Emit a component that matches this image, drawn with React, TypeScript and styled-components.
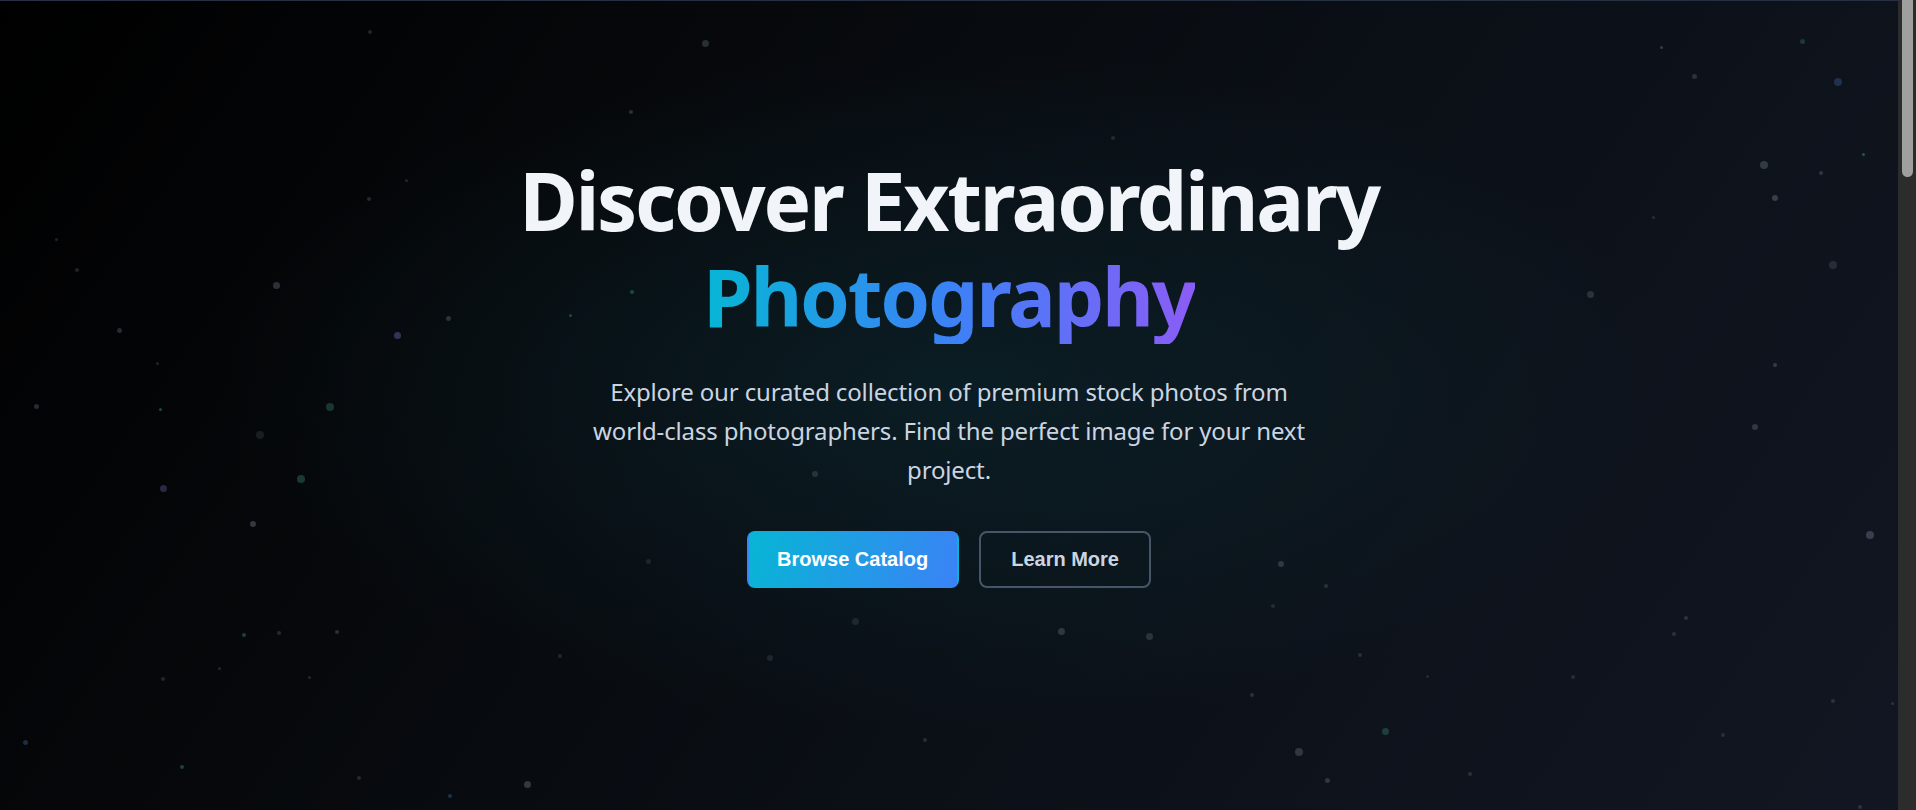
import React from "react";
import styled, { createGlobalStyle } from "styled-components";

const GlobalStyle = createGlobalStyle`
  html, body {
    margin: 0;
    padding: 0;
    background: #0b0f17;
    overflow: hidden;
  }
  body {
    font-family: "Noto Sans", "Open Sans", sans-serif;
  }
`;

const Page = styled.div`
  display: flex;
  height: 810px;
`;

const Hero = styled.section`
  position: relative;
  overflow: hidden;
  flex: 1;
  box-sizing: border-box;
  border-top: 1px solid #263042;
  background:
    radial-gradient(ellipse 55% 60% at 50% 48%, rgba(12, 40, 48, 0.6), rgba(12, 40, 48, 0) 70%),
    linear-gradient(125deg, #000000 0%, #06080b 30%, #0b1017 60%, #111622 100%);
  display: flex;
  flex-direction: column;
  align-items: center;
  padding-top: 151px;
`;

const ScrollTrack = styled.div`
  width: 18px;
  flex-shrink: 0;
  background: #2c2c2c;
  display: flex;
  justify-content: flex-start;
  padding-left: 4px;
  box-sizing: border-box;
`;

const ScrollThumb = styled.div`
  width: 11px;
  height: 177px;
  background: #9f9f9f;
  border-radius: 0 0 6px 6px;
`;

const StarField = styled.div`
  position: absolute;
  inset: 0;
  pointer-events: none;
`;

const Star = styled.span<{ $c: string }>`
  position: absolute;
  border-radius: 50%;
  background: ${(p) => p.$c};
`;

const Content = styled.div`
  position: relative;
  display: flex;
  flex-direction: column;
  align-items: center;
  text-align: center;
`;

const Title = styled.h1`
  margin: 0;
  font-family: "Noto Sans", "Open Sans", sans-serif;
  font-weight: 700;
  font-size: 80px;
  line-height: 96px;
  color: #f1f5f9;
  letter-spacing: -2.3px;
`;

const GradientWord = styled.span`
  display: inline-block;
  background: linear-gradient(90deg, #06b6d4 0%, #3b82f6 50%, #8b5cf6 100%);
  -webkit-background-clip: text;
  background-clip: text;
  color: transparent;
`;

const Subtitle = styled.p`
  margin: 28px 0 0;
  max-width: 738px;
  font-family: "Noto Sans", "Open Sans", sans-serif;
  font-size: 24px;
  line-height: 39px;
  color: #cbd5e1;
  letter-spacing: -0.15px;
`;

const Actions = styled.div`
  display: flex;
  gap: 20px;
  margin-top: 42px;
`;

const Button = styled.button<{ $variant: "primary" | "outline" }>`
  font-family: "Liberation Sans", Arial, sans-serif;
  font-weight: 700;
  font-size: 20px;
  line-height: 25px;
  padding: 14px ${(p) => (p.$variant === "primary" ? "28.5px" : "30.5px")};
  border-radius: 8px;
  cursor: pointer;
  border: 2px solid
    ${(p) => (p.$variant === "primary" ? "transparent" : "#475569")};
  color: ${(p) => (p.$variant === "primary" ? "#ffffff" : "#cbd5e1")};
  background: ${(p) =>
    p.$variant === "primary"
      ? "linear-gradient(110deg, #06b6d4 0%, #3b82f6 100%)"
      : "transparent"};
`;

const stars: [number, number, number, string][] = [
  [577, 35, 7, "rgba(148,163,184,0.25)"],
  [1360, 38, 3, "rgba(148,163,184,0.3)"],
  [1475, 33, 5, "rgba(94,234,212,0.18)"],
  [1387, 62, 5, "rgba(148,163,184,0.22)"],
  [1504, 66, 8, "rgba(96,165,250,0.22)"],
  [516, 91, 4, "rgba(148,163,184,0.25)"],
  [911, 112, 4, "rgba(148,163,184,0.18)"],
  [1444, 134, 8, "rgba(148,163,184,0.28)"],
  [1525, 126, 3, "rgba(94,234,212,0.3)"],
  [1490, 141, 4, "rgba(148,163,184,0.25)"],
  [1453, 161, 6, "rgba(148,163,184,0.3)"],
  [303, 25, 4, "rgba(148,163,184,0.2)"],
  [333, 147, 3, "rgba(148,163,184,0.2)"],
  [302, 162, 4, "rgba(148,163,184,0.22)"],
  [1353, 177, 3, "rgba(148,163,184,0.2)"],
  [46, 195, 3, "rgba(148,163,184,0.2)"],
  [63, 220, 4, "rgba(148,163,184,0.2)"],
  [226, 233, 7, "rgba(148,163,184,0.28)"],
  [517, 238, 4, "rgba(94,234,212,0.25)"],
  [1302, 240, 7, "rgba(148,163,184,0.22)"],
  [1500, 216, 8, "rgba(148,163,184,0.18)"],
  [98, 270, 5, "rgba(148,163,184,0.25)"],
  [325, 274, 7, "rgba(167,139,250,0.3)"],
  [367, 260, 5, "rgba(148,163,184,0.25)"],
  [467, 257, 3, "rgba(94,234,212,0.25)"],
  [129, 297, 3, "rgba(148,163,184,0.2)"],
  [1453, 298, 4, "rgba(148,163,184,0.28)"],
  [30, 332, 5, "rgba(148,163,184,0.25)"],
  [131, 334, 3, "rgba(94,234,212,0.3)"],
  [270, 332, 8, "rgba(94,234,212,0.2)"],
  [1436, 349, 6, "rgba(148,163,184,0.25)"],
  [213, 355, 8, "rgba(148,163,184,0.15)"],
  [246, 391, 8, "rgba(94,234,212,0.22)"],
  [134, 399, 7, "rgba(167,139,250,0.25)"],
  [667, 387, 6, "rgba(148,163,184,0.2)"],
  [207, 428, 6, "rgba(148,163,184,0.32)"],
  [1530, 437, 8, "rgba(148,163,184,0.3)"],
  [531, 459, 5, "rgba(148,163,184,0.15)"],
  [1048, 461, 6, "rgba(148,163,184,0.25)"],
  [1085, 479, 4, "rgba(148,163,184,0.2)"],
  [1042, 495, 4, "rgba(148,163,184,0.18)"],
  [1380, 505, 4, "rgba(148,163,184,0.22)"],
  [700, 508, 7, "rgba(148,163,184,0.15)"],
  [869, 516, 7, "rgba(148,163,184,0.25)"],
  [941, 520, 7, "rgba(148,163,184,0.22)"],
  [200, 519, 4, "rgba(94,234,212,0.25)"],
  [228, 517, 4, "rgba(148,163,184,0.22)"],
  [276, 516, 4, "rgba(148,163,184,0.25)"],
  [1370, 518, 4, "rgba(148,163,184,0.2)"],
  [630, 538, 6, "rgba(148,163,184,0.15)"],
  [1113, 535, 4, "rgba(148,163,184,0.2)"],
  [458, 536, 4, "rgba(148,163,184,0.18)"],
  [253, 554, 3, "rgba(148,163,184,0.2)"],
  [133, 555, 4, "rgba(148,163,184,0.2)"],
  [180, 546, 3, "rgba(148,163,184,0.2)"],
  [1287, 553, 4, "rgba(148,163,184,0.18)"],
  [1168, 553, 3, "rgba(148,163,184,0.18)"],
  [1025, 568, 4, "rgba(148,163,184,0.22)"],
  [1500, 573, 4, "rgba(148,163,184,0.2)"],
  [1134, 598, 7, "rgba(94,234,212,0.2)"],
  [21, 607, 5, "rgba(96,165,250,0.25)"],
  [757, 605, 4, "rgba(148,163,184,0.2)"],
  [1063, 615, 8, "rgba(148,163,184,0.25)"],
  [1410, 601, 4, "rgba(148,163,184,0.18)"],
  [149, 627, 4, "rgba(94,234,212,0.25)"],
  [432, 641, 7, "rgba(148,163,184,0.3)"],
  [294, 636, 4, "rgba(148,163,184,0.2)"],
  [1086, 638, 5, "rgba(148,163,184,0.25)"],
  [1203, 633, 4, "rgba(148,163,184,0.2)"],
  [368, 651, 4, "rgba(96,165,250,0.25)"],
  [1549, 575, 3, "rgba(148,163,184,0.2)"],
  [1522, 660, 4, "rgba(148,163,184,0.2)"],
];

const SCALE = 1916 / 1568;

export default function App() {
  return (
    <>
      <GlobalStyle />
      <Page>
        <Hero>
          <StarField>
            {stars.map(([x, y, s, c], i) => (
              <Star
                key={i}
                $c={c}
                style={{
                  left: Math.round(x * SCALE - s / 2),
                  top: Math.round(y * SCALE - s / 2),
                  width: s,
                  height: s,
                }}
              />
            ))}
          </StarField>
          <Content>
            <Title>
              Discover Extraordinary
              <br />
              <GradientWord>Photography</GradientWord>
            </Title>
            <Subtitle>
              Explore our curated collection of premium stock photos from
              world-class photographers. Find the perfect image for your next
              project.
            </Subtitle>
            <Actions>
              <Button $variant="primary">Browse Catalog</Button>
              <Button $variant="outline">Learn More</Button>
            </Actions>
          </Content>
        </Hero>
        <ScrollTrack>
          <ScrollThumb />
        </ScrollTrack>
      </Page>
    </>
  );
}
